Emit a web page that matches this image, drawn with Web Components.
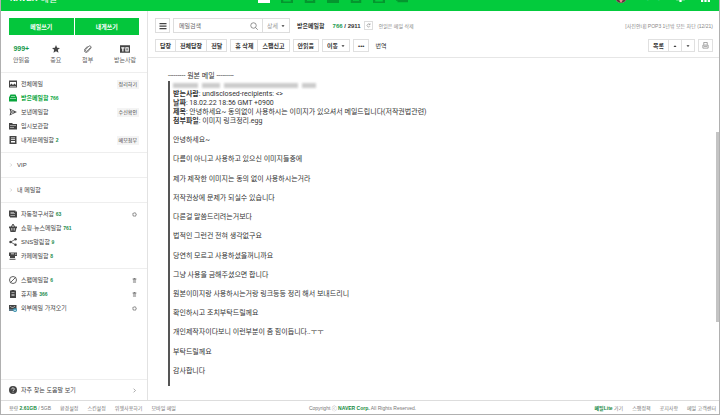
<!DOCTYPE html>
<html lang="ko">
<head>
<meta charset="utf-8">
<title>메일</title>
<style>
  body{
    margin: 0;
    font-family: "Liberation Sans", "Noto Sans CJK KR", sans-serif;
    font-size: 6px;
    line-height: 8px;
    color: #333;
    background-color: white;
  }
</style>
</head>
<body>
<mail-app></mail-app>

<script>
const icons = {
  menu: '<path d="M1 2h14v2.5H1zM1 7h14v2.5H1zM1 12h14v2.5H1z"/>',
  search: '<g fill="none" stroke="currentColor" stroke-width="1.6"><circle cx="7" cy="7" r="5.5"/><path d="M11 11l4.500 4.500"/></g>',
  down: '<path d="M2 5h12l-6 7z"/>',
  up: '<path d="M2 12h12L8 5z"/>',
  refresh: '<g fill="none" stroke="currentColor" stroke-width="1.600"><path d="M12.500 5A5 5 0 1 0 13 10"/><path d="M13 1v4.500H8.500"/></g>',
  print: '<g fill="none" stroke="currentColor" stroke-width="1.500"><path d="M4 6V1h8v5M2 7h12v7H2zM4 10h8"/></g>',
  star: '<path d="M8 0l2.300 5.400 5.700.5-4.300 3.800 1.300 5.800L8 12.500l-5 3 1.300-5.800L0 5.900l5.700-.5z"/>',
  clip: '<path d="M13 5l-6.500 7a2 2 0 0 1-3-3L10 2a3 3 0 0 1 4 4l-7 8a4 4 0 0 1-6-5l6-6.500" fill="none" stroke="currentColor" stroke-width="1.400"/>',
  to: '<path fill-rule="evenodd" d="M0 2h16v12H0zM2 5v2h1.600v5h2V7h1.600V5zM8.500 5v7H14V5zM10.300 6.700h1.900v3.600h-1.900z"/>',
  all: '<path fill-rule="evenodd" d="M0 1h16v14H0zM2 4v6l3-3 3 3 3-3 3 3V4zM2 12v1.200h12V12z"/>',
  inbox: '<path fill-rule="evenodd" d="M3 1h10l3 6v8H0V7zM4 4h8v1H4zM2 8v1h12V8z"/>',
  send: '<path fill-rule="evenodd" d="M1 1l15 7-15 7 2-7zM4 4l1 3.200h6zM4 12l1-3.200h6z"/>',
  draft: '<path fill-rule="evenodd" d="M0 2h6l2 2h8v11H0zM2 7v1.200h12V7zM2 10v1h8v-1z"/>',
  note: '<path fill-rule="evenodd" d="M1 0h14v16H1zM4 3v1.500h8V3zM4 6v1.500h8V6zM4 10v3h8v-3z"/>',
  bill: '<path fill-rule="evenodd" d="M0 1h13v2h3v12H2v-2H0zM3 4v1h7V4zM3 7v1h9V7zM3 10v1h9v-1z"/>',
  basket: '<path fill-rule="evenodd" d="M4 5l3-5h2l3 5h4v3h-1l-2 8H3L1 8H0V5zM7 3L6 5h4L9 3zM5 8v5h1V8zM7.500 8v5h1V8zM10 8v5h1V8z"/>',
  share: '<g><circle cx="13" cy="2.500" r="2.500"/><circle cx="3" cy="8" r="2.500"/><circle cx="13" cy="13.500" r="2.500"/><path d="M13 2.500L3 8l10 5.500" fill="none" stroke="currentColor" stroke-width="1.500"/></g>',
  cup: '<path fill-rule="evenodd" d="M0 1h16v7h-4v4H2V8H0zM13 3v3h1.500V3zM4 3v1.300h6V3zM1 13.500h12V15.500H1z"/>',
  block: '<g fill="none" stroke="currentColor" stroke-width="1.700"><circle cx="8" cy="8" r="7"/><path d="M3 13L13 3"/></g>',
  bin: '<path fill-rule="evenodd" d="M5 0h6v1h3v15H2V1h3zM5 5v1h6V5zM5 8v1h6V8zM5 11v1h6v-1z"/>',
  trash: '<path d="M1 2h14v1.600H1zM5 0h6v2H5zM3 5h10v2H3zM3 8.500h10v2H3zM3 12h10v2H3z"/>',
  gear: '<g fill="none" stroke="currentColor"><circle cx="8" cy="8" r="5" stroke-width="2.500"/><circle cx="8" cy="8" r="7" stroke-width="1.500" stroke-dasharray="2.500 3"/></g>',
  external: '<path fill-rule="evenodd" d="M0 2h15v8H0zM2 4v1l5 3 5-3V4L7 7z"/><path d="M0 10h8v4H0z" fill="#5a7585"/><circle cx="12" cy="12" r="4" fill="#2d8aa8"/><path d="M12 10v4M10 12l2 2 2-2" stroke="white" fill="none"/>',
  help: '<circle cx="8" cy="8" r="8"/><path d="M5.500 6.500a2.500 2.500 0 1 1 3.500 2q-1 .5-1 1.500M8 11.500v1.800" fill="none" stroke="white" stroke-width="1.600"/>',
  right: '<path d="M5 2l6 6-6 6" fill="none" stroke="currentColor" stroke-width="2"/>',
  mail: '<path fill-rule="evenodd" d="M0 0h16v16H0zM2 3v2l6 4 6-4V3L8 7z"/>',
  calendar: '<path fill-rule="evenodd" d="M0 1h16v15H0zM3 5v2h10V5zM3 8v2h10V8zM3 12v2h10v-2z"/>',
  person: '<path d="M4 0h8v8h4v8H0V8h4z"/>',
  bell: '<path d="M8 0a5 5 0 0 1 5 5v5l3 3H0l3-3V5a5 5 0 0 1 5-5zM6 13h4v3H6z"/>',
  grid: '<path d="M0 0h4v4H0zM6 0h4v4H6zM12 0h4v4h-4zM0 6h4v4H0zM6 6h4v4H6zM12 6h4v4h-4zM0 12h4v4H0zM6 12h4v4H6zM12 12h4v4h-4z"/>',
  avatar: '<circle cx="8" cy="8" r="8" fill="#f6e6e4"/><path d="M0 9q2 7 8 7t8-7l-4 3-4-5-4 5z" fill="#5d3a3c"/><path d="M5 11h6l-3 5z" fill="#f08a92"/>'
};

// registers an element whose shadow root is cloned from a template
function define(name, html, setup){
  const template = document.createElement('template');
  template.innerHTML = html;

  customElements.define(name, class extends HTMLElement{
    constructor(){
      super();
      this.attachShadow({mode:'open'});
      this.shadowRoot.appendChild(template.content.cloneNode(true));
    }

    connectedCallback(){
      if(setup) setup(this, this.shadowRoot);
    }
  });
}

define('mail-icon', `
  <style>
  :host{
    display: inline-block;
    width: var(--icon, 8px);
    height: var(--icon, 8px);
    flex: none;
  }
  svg{
    display: block;
    width: 100%;
    height: 100%;
    fill: currentColor;
  }
  </style>
  <svg viewBox="0 0 16 16" aria-hidden="true"></svg>
`, (el, root) => {
  root.querySelector('svg').innerHTML = icons[el.getAttribute('name')];
});

define('mail-header', `
  <style>
  :host{
    display: block;
    background-color: #03cb3d;
    overflow: hidden;
    height: 11px;
  }
  /* the bar is scrolled up, only its lower part shows */
  header{
    display: flex;
    align-items: center;
    height: 28px;
    margin-top: -17px;
    padding: 0 9px;
    color: white;
  }
  .logo{
    width: 248px;
    font-size: 9px;
    line-height: 12px;
    color: white;
    text-decoration: none;
    display: flex;
    align-items: center;
    gap: 3px;
    padding-top: 4px;
  }
  .logo b{
    font-size: 8px;
  }
  nav{
    display: flex;
    gap: 11px;
    flex: 1;
    --icon: 12px;
    color: #05962f;
  }
  nav mail-icon:first-child{
    color: white;
  }
  .user{
    display: flex;
    align-items: center;
    gap: 16px;
    --icon: 9px;
  }
  .user mail-icon:first-child{
    --icon: 12px;
  }
  </style>
  <header>
    <a class="logo" href="#"><b>NAVER</b><span>메일</span></a>
    <nav>
      <mail-icon name="mail"></mail-icon>
      <mail-icon name="calendar"></mail-icon>
      <mail-icon name="note"></mail-icon>
      <mail-icon name="person"></mail-icon>
      <mail-icon name="note"></mail-icon>
      <mail-icon name="calendar"></mail-icon>
      <mail-icon name="bill"></mail-icon>
      <mail-icon name="down"></mail-icon>
    </nav>
    <div class="user">
      <mail-icon name="avatar"></mail-icon>
      <span>사용자</span>
      <mail-icon name="bell"></mail-icon>
      <mail-icon name="grid"></mail-icon>
    </div>
  </header>
`);

define('quick-link', `
  <style>
  a{
    display: flex;
    flex-direction: column;
    align-items: center;
    gap: 3px;
    color: #666;
    text-decoration: none;
  }
  .top{
    display: flex;
    align-items: center;
    height: 9px;
    color: #444;
  }
  </style>
  <a href="#"><span class="top"><slot name="top"></slot></span><slot></slot></a>
`);

define('folder-item', `
  <style>
  :host{
    display: flex;
    align-items: center;
    height: 14px;
    padding: 0 8px;
    color: #444;
  }
  a{
    display: flex;
    align-items: center;
    gap: 4px;
    flex: 1;
    color: inherit;
    text-decoration: none;
    white-space: nowrap;
  }
  b{
    font-size: 5px;
    color: #1c8c4c;
  }
  :host([active]) a, :host([active]) b{
    color: #08a53c;
    font-weight: bold;
  }
  button{
    border: none;
    padding: 0 2px;
    font: inherit;
    font-size: 5px;
    line-height: 9px;
    color: #444;
    background-color: #f4f4f4;
  }
  button.plain{
    --icon: 5px;
    display: flex;
    background: none;
    color: #777;
  }
  :host([group]){
    height: 24px;
  }
  :host([group]) mail-icon{
    --icon: 4px;
    color: #aaa;
  }
  </style>
  <a href="#"><mail-icon></mail-icon><span><slot></slot> <b></b></span></a>
`, (el, root) => {
  root.querySelector('mail-icon').setAttribute('name', el.getAttribute('icon'));
  root.querySelector('mail-icon').connectedCallback();
  root.querySelector('b').textContent = el.getAttribute('count') || '';

  const action = el.getAttribute('action');
  const tool = el.getAttribute('tool');
  if(action || tool){
    const button = document.createElement('button');
    if(action){
      button.textContent = action;
    } else {
      button.className = 'plain';
      button.setAttribute('aria-label', tool);
      button.innerHTML = `<mail-icon name="${tool}"></mail-icon>`;
    }
    root.appendChild(button);
  }
});

define('mail-sidebar', `
  <style>
  :host{
    display: flex;
    flex-direction: column;
    width: 146px;
    flex: none;
    border-right: 1px solid #e2e2e2;
  }
  .write{
    display: flex;
    gap: 1px;
    padding: 7px 8px;
  }
  .write button{
    flex: 1;
    height: 17px;
    border: none;
    padding: 0;
    font: inherit;
    font-weight: bold;
    color: white;
    background-color: #04c63c;
  }
  .quick{
    display: flex;
    justify-content: space-between;
    padding: 2px 11px 8px 12px;
  }
  .quick b{
    font-size: 7px;
    color: #16994a;
  }
  section{
    border-top: 1px solid #eee;
    padding: 4px 0 5px;
  }
  section.group{
    padding: 0;
  }
  .help{
    margin-top: auto;
    padding: 3px 0;
  }
  </style>
  <div class="write"><button>메일쓰기</button><button>내게쓰기</button></div>
  <div class="quick">
    <quick-link><b slot="top">999+</b>안읽음</quick-link>
    <quick-link><mail-icon slot="top" name="star"></mail-icon>중요</quick-link>
    <quick-link><mail-icon slot="top" name="clip"></mail-icon>첨부</quick-link>
    <quick-link><mail-icon slot="top" name="to" style="--icon: 10px"></mail-icon>받는사람</quick-link>
  </div>
  <section>
    <folder-item icon="all" action="정리하기">전체메일</folder-item>
    <folder-item icon="inbox" count="766" active>받은메일함</folder-item>
    <folder-item icon="send" action="수신확인">보낸메일함</folder-item>
    <folder-item icon="draft">임시보관함</folder-item>
    <folder-item icon="note" count="2" action="메모첨부">내게쓴메일함</folder-item>
  </section>
  <section class="group"><folder-item icon="right" group>VIP</folder-item></section>
  <section class="group"><folder-item icon="right" group>내 메일함</folder-item></section>
  <section>
    <folder-item icon="bill" count="63" tool="gear">자동청구서함</folder-item>
    <folder-item icon="basket" count="761">쇼핑·뉴스메일함</folder-item>
    <folder-item icon="share" count="9">SNS알림함</folder-item>
    <folder-item icon="cup" count="8">카페메일함</folder-item>
  </section>
  <section>
    <folder-item icon="block" count="6" tool="trash">스팸메일함</folder-item>
    <folder-item icon="bin" count="366" tool="trash">휴지통</folder-item>
    <folder-item icon="external" tool="gear">외부메일 가져오기</folder-item>
  </section>
  <section class="help">
    <folder-item icon="help" tool="right">자주 찾는 도움말 보기</folder-item>
  </section>
`);

define('tool-group', `
  <style>
  :host{
    display: flex;
    border: 1px solid #e0e0e0;
  }
  ::slotted(button), ::slotted(select){
    appearance: none;
    height: 11px;
    margin: 0;
    border: none;
    padding: 0 4px;
    font: inherit;
    font-weight: bold;
    line-height: 8px;
    color: #333;
    background-color: white;
    white-space: nowrap;
  }
  ::slotted(select){
    padding: 0 2px 0 4px;
  }
  ::slotted(button:not(:first-child)){
    border-left: 1px solid #e0e0e0;
  }
  ::slotted(mail-icon){
    --icon: 4px;
    align-self: center;
    margin-right: 4px;
  }
  </style>
  <slot></slot>
`);

define('mail-toolbar', `
  <style>
  :host{
    display: flex;
    flex-direction: column;
    gap: 6px;
    padding: 7px 6px 5px 7px;
    border-bottom: 1px solid #e6e6e6;
    white-space: nowrap;
  }
  .row{
    display: flex;
    align-items: center;
    gap: 3px;
  }
  .menu, .search{
    box-sizing: border-box;
    height: 15px;
    border: 1px solid #ddd;
    background-color: white;
  }
  .menu{
    display: flex;
    align-items: center;
    justify-content: center;
    width: 15px;
    padding: 0;
    color: #444;
  }
  .search{
    display: flex;
    align-items: center;
    width: 117px;
  }
  .search input{
    flex: 1;
    min-width: 0;
    border: none;
    padding: 0 5px;
    font: inherit;
    background: none;
    outline: none;
  }
  input::placeholder{
    color: #666;
  }
  .search button{
    display: flex;
    border: none;
    padding: 0 4px;
    background: none;
    color: #777;
  }
  .detail{
    display: flex;
    align-items: center;
    height: 13px;
    border-left: 1px solid #ddd;
    padding: 0 4px;
    gap: 2px;
    --icon: 4px;
  }
  .detail select{
    appearance: none;
    border: none;
    padding: 0;
    font: inherit;
    color: #999;
    background: none;
  }
  h1{
    display: flex;
    align-items: center;
    gap: 8px;
    margin: 0 0 0 4px;
    font-size: 6px;
    line-height: 8px;
  }
  h1 span{
    color: #1a9a50;
  }
  .refresh{
    display: flex;
    border: 1px solid #ddd;
    padding: 1px;
    background: none;
    color: #777;
    --icon: 5px;
  }
  a{
    color: #888;
    text-decoration: none;
    margin-left: 3px;
    font-size: 5px;
  }
  .right{
    margin-left: auto;
  }
  a.plain{
    color: #333;
    font-size: 6px;
  }
  .print{
    color: #777;
  }
  </style>
  <div class="row">
    <button class="menu" aria-label="메뉴"><mail-icon name="menu"></mail-icon></button>
    <div class="search">
      <input type="search" placeholder="메일검색" aria-label="메일검색">
      <button aria-label="검색"><mail-icon name="search"></mail-icon></button>
      <div class="detail">
        <select aria-label="상세"><option>상세</option></select>
        <mail-icon name="down"></mail-icon>
      </div>
    </div>
    <h1>받은메일함 <div><span>766</span> / 2911</div></h1>
    <button class="refresh" aria-label="새로고침"><mail-icon name="refresh"></mail-icon></button>
    <a href="#">안읽은 메일 삭제</a>
    <a class="right" href="#">[사진안내] POP3 1년밖 모든 차단 (12/21)</a>
  </div>
  <div class="row">
    <tool-group><button>답장</button><button>전체답장</button><button>전달</button></tool-group>
    <tool-group><button>휴 삭제</button><button>스팸신고</button></tool-group>
    <tool-group><button>안읽음</button></tool-group>
    <tool-group>
      <select aria-label="이동"><option>이동</option></select>
      <mail-icon name="down"></mail-icon>
    </tool-group>
    <tool-group><button>•••</button></tool-group>
    <a class="plain" href="#">번역</a>
    <tool-group class="right">
      <button>목록</button>
      <button aria-label="위"><mail-icon name="up" style="--icon: 4px"></mail-icon></button>
      <button aria-label="아래"><mail-icon name="down" style="--icon: 4px"></mail-icon></button>
    </tool-group>
    <tool-group><button class="print" aria-label="인쇄" style="padding: 0 3px"><mail-icon name="print" style="--icon: 7px; vertical-align: middle"></mail-icon></button></tool-group>
  </div>
`);

define('mail-message', `
  <style>
  :host{
    display: flex;
    flex-direction: column;
    flex: 1;
    padding: 14px 3px 14px 20px;
    font-family: Roboto, "Noto Sans CJK KR", sans-serif;
    font-size: 7px;
    line-height: 9px;
    position: relative;
  }
  blockquote{
    display: flex;
    flex-direction: column;
    justify-content: space-between;
    flex: 1;
    margin: 0;
    padding: 0 0 10px 3px;
    border-left: 2px solid #555;
  }
  p{
    margin: 0;
  }
  .sender{
    display: flex;
    gap: 4px;
    height: 9px;
    align-items: center;
    filter: blur(1px);
  }
  .sender i{
    height: 5px;
    background-color: #ccc;
  }
  .thumb{
    position: absolute;
    top: 74px;
    right: 0;
    width: 3px;
    height: 190px;
    background-color: #c4c4c4;
  }
  </style>
  <p>--------- 원본 메일 ---------</p>
  <blockquote>
    <div>
      <div class="sender"><i style="width: 25px"></i><i style="width: 18px"></i><i style="width: 74px"></i><i style="width: 14px"></i></div>
      <p><b>받는사람</b>: undisclosed-recipients: &lt;&gt;</p>
      <p><b>날짜</b>: 18.02.22 18:56 GMT +0900</p>
      <p><b>제목</b>: 안녕하세요~ 동의없이 사용하시는 이미지가 있으셔서 메일드립니다(저작권법관련)</p>
      <p><b>첨부파일</b>: 이미지 링크정리.egg</p>
    </div>
    <p>안녕하세요~</p>
    <p>다름이 아니고 사용하고 있으신 이미지들중에</p>
    <p>제가 제작한 이미지는 동의 없이 사용하시는거라</p>
    <p>저작권상에 문제가 되실수 있습니다</p>
    <p>다른걸 말씀드리려는거보다</p>
    <p>법적인 그런건 전혀 생각없구요</p>
    <p>당연히 모르고 사용하셨을꺼니까요</p>
    <p>그냥 사용을 금해주셨으면 합니다</p>
    <p>원본이미지랑 사용하시는거랑 링크등등 정리 해서 보내드리니</p>
    <p>확인하시고 조치부탁드릴께요</p>
    <p>개인제작자이다보니 이런부분이 좀 힘이듭니다..ㅜㅜ</p>
    <p>부탁드릴께요</p>
    <p>감사합니다</p>
  </blockquote>
  <div class="thumb"></div>
`);

define('mail-footer', `
  <style>
  :host{
    display: grid;
    grid-template-columns: 1fr auto 1fr;
    align-items: center;
    height: 13px;
    padding: 0 3px 0 8px;
    border-top: 1px solid #ddd;
    font-size: 5px;
    color: #777;
    white-space: nowrap;
  }
  nav{
    display: flex;
    gap: 9px;
  }
  nav:last-child{
    justify-content: flex-end;
  }
  a{
    color: inherit;
    text-decoration: none;
  }
  b{
    color: #168a3e;
  }
  small{
    font-size: 5px;
  }
  </style>
  <nav>
    <span>용량 <b>2.61GB</b> / 5GB</span>
    <a href="#">환경설정</a>
    <a href="#">스킨설정</a>
    <a href="#">위젯사용하기</a>
    <a href="#">모바일 메일</a>
  </nav>
  <small>Copyright ⓒ <b>NAVER Corp.</b> All Rights Reserved.</small>
  <nav>
    <a href="#"><b>메일Lite</b> 가기</a>
    <a href="#">스팸정책</a>
    <a href="#">공지사항</a>
    <a href="#">메일 고객센터</a>
  </nav>
`);

define('mail-app', `
  <style>
  :host{
    display: flex;
    flex-direction: column;
    box-sizing: border-box;
    min-height: 100vh;
    border: solid #b0b0b0;
    border-width: 0 1px 1px 1px;
  }
  .body{
    display: flex;
    flex: 1;
  }
  main{
    display: flex;
    flex-direction: column;
    flex: 1;
    min-width: 0;
  }
  </style>
  <mail-header></mail-header>
  <div class="body">
    <mail-sidebar></mail-sidebar>
    <main>
      <mail-toolbar></mail-toolbar>
      <mail-message></mail-message>
    </main>
  </div>
  <mail-footer></mail-footer>
`);
</script>
</body>
</html>
